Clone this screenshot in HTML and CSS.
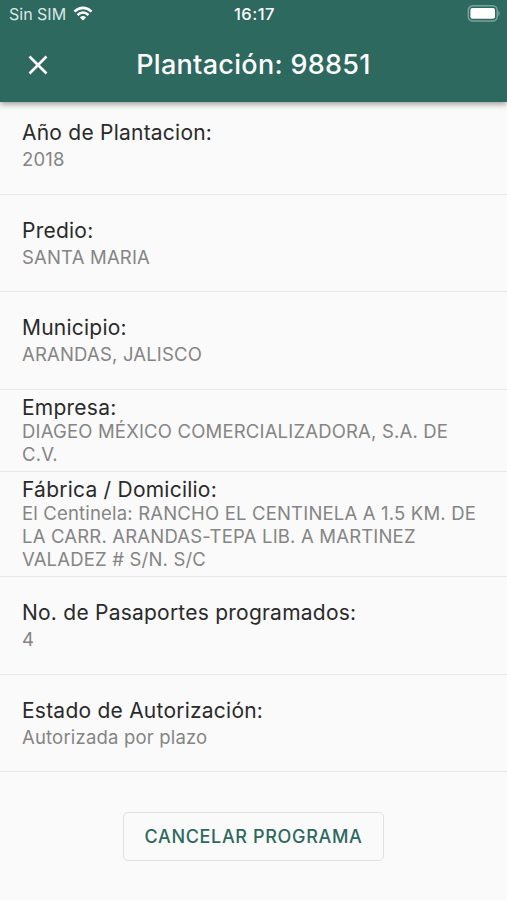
FILE: index.html
```html
<!DOCTYPE html>
<html lang="es">
<head>
<meta charset="utf-8">
<title>Plantación</title>
<link rel="stylesheet" href="styles.css">
</head>
<body>
<header class="header">
  <div class="status">
    <div class="carrier"><span class="sim">Sin SIM</span>
      <svg class="wifi" width="20" height="15" viewBox="0 0 20 15"><path d="M10 14.6 6.9 11.4Q10 8.8 13.1 11.4Z" fill="#fff"/><path d="M4.5 8.9Q10 4.1 15.5 8.9M1.4 5.6Q10-2 18.6 5.6" fill="none" stroke="#fff" stroke-width="2.6"/></svg>
    </div>
    <span class="clock">16:17</span>
    <svg class="battery" width="33" height="17" viewBox="0 0 33 17"><rect x="1.3" y=".8" width="28.9" height="15.2" rx="4.5" fill="none" stroke="#79a29a" stroke-width="1.5"/><rect x="3.4" y="3" width="24.6" height="10.8" rx="2" fill="#fff"/><path d="M31.3 5.8Q32.7 6.5 32.7 8.5T31.3 11.2Z" fill="#79a29a"/></svg>
  </div>
  <div class="bar">
    <svg class="close" width="20" height="20" viewBox="0 0 20 20"><path d="M1.5 1.5 18.5 18.5M18.5 1.5 1.5 18.5" stroke="#fff" stroke-width="2.6"/></svg>
    <h1 class="title">Plantación: 98851</h1>
  </div>
</header>
<main>
  <section class="row first"><h2>Año de Plantacion:</h2><p>2018</p></section>
  <section class="row"><h2>Predio:</h2><p>SANTA MARIA</p></section>
  <section class="row"><h2>Municipio:</h2><p>ARANDAS, JALISCO</p></section>
  <section class="row dense company"><h2>Empresa:</h2><p>DIAGEO MÉXICO COMERCIALIZADORA, S.A. DE<br>C.V.</p></section>
  <section class="row dense factory"><h2>Fábrica / Domicilio:</h2><p>El Centinela: RANCHO EL CENTINELA A 1.5 KM. DE<br>LA CARR. ARANDAS-TEPA LIB. A MARTINEZ<br>VALADEZ # S/N. S/C</p></section>
  <section class="row"><h2>No. de Pasaportes programados:</h2><p>4</p></section>
  <section class="row"><h2>Estado de Autorización:</h2><p>Autorizada por plazo</p></section>
  <button class="cancel">CANCELAR PROGRAMA</button>
</main>
</body>
</html>
```
FILE: styles.css
```css
* { box-sizing: border-box; }
body { margin: 0; height: 900px; overflow: hidden; background: #fafafa; font-family: Inter, "Liberation Sans", sans-serif; }
.header { position: relative; height: 102px; background: #2d695f; color: #fff; box-shadow: 0 2px 6px rgba(0,0,0,.4); }
.status { display: grid; grid-template-columns: 1fr auto 1fr; align-items: center; height: 27px; padding: 0 7px 0 9px; }
.carrier { display: flex; align-items: center; gap: 7px; font-size: 16px; line-height: 20px; color: #dce7e5; }
.clock { font-size: 16.5px; line-height: 20px; font-weight: 500; letter-spacing: .5px; }
.battery { justify-self: end; }
.bar { display: grid; grid-template-columns: 76px 1fr 76px; align-items: center; height: 75px; }
.close { margin-left: 28px; }
.title { margin: 0; text-align: center; font-size: 27px; line-height: 32px; font-weight: 500; letter-spacing: .3px; white-space: nowrap; }
.row { display: flex; flex-direction: column; justify-content: center; height: 97.4px; padding: 2px 22px 0; border-bottom: 1px solid #e8e8e8; white-space: nowrap; }
.first { height: 92.8px; padding: 0 22px 3px; }
.row h2 { margin: 0; font-size: 21px; line-height: 27px; font-weight: 400; color: #2a2a2a; letter-spacing: .23px; }
.row p { margin: 0; font-size: 18.5px; line-height: 27px; color: #858585; letter-spacing: .18px; }
.row.dense { padding-top: 1px; }
.company { height: 82px; }
.factory { height: 105.6px; }
.dense h2 { line-height: 25px; }
.dense p { line-height: 23px; }
.cancel { display: block; width: 261px; height: 49px; margin: 40px auto 0; padding: 0; border: 1.5px solid #e0e0e0; border-radius: 5px; background: transparent; color: #2d695f; font: 500 18px Inter, sans-serif; letter-spacing: .65px; }
```
